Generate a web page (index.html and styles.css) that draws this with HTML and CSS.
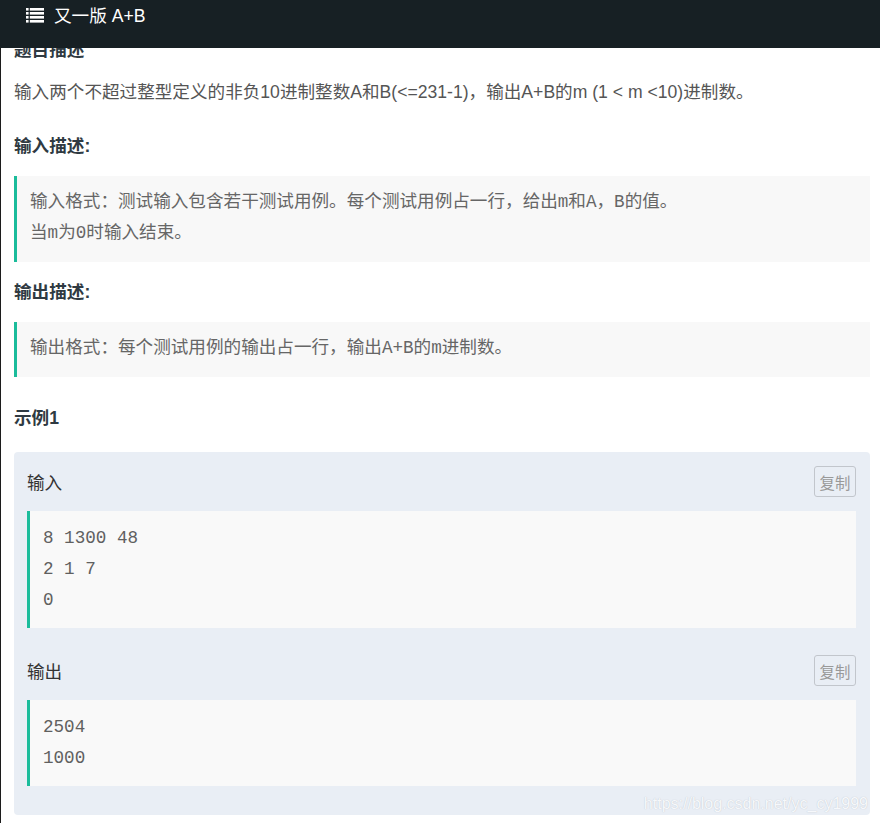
FILE: index.html
```html
<!DOCTYPE html>
<html lang="zh-CN">
<head>
<meta charset="utf-8">
<title>又一版 A+B</title>
<link rel="stylesheet" href="styles.css">
</head>
<body>
<header class="topbar">
  <svg class="list-icon" width="18" height="15" viewBox="0 0 18 15">
    <g fill="#ffffff">
      <rect x="0" y="0" width="2.6" height="2.6"/>
      <rect x="3.8" y="0" width="14.2" height="2.6"/>
      <rect x="0" y="4" width="2.6" height="2.6"/>
      <rect x="3.8" y="4" width="14.2" height="2.6"/>
      <rect x="0" y="8" width="2.6" height="2.6"/>
      <rect x="3.8" y="8" width="14.2" height="2.6"/>
      <rect x="0" y="12" width="2.6" height="2.6"/>
      <rect x="3.8" y="12" width="14.2" height="2.6"/>
    </g>
  </svg>
  <span class="title">又一版 A+B</span>
</header>

<main class="page">
  <h3 class="sec-title first">题目描述</h3>
  <p class="desc">输入两个不超过整型定义的非负10进制整数A和B(&lt;=231-1)，输出A+B的m (1 &lt; m &lt;10)进制数。</p>

  <h3 class="sec-title">输入描述:</h3>
  <blockquote class="quote">输入格式：测试输入包含若干测试用例。每个测试用例占一行，给出m和A，B的值。<br>当m为0时输入结束。</blockquote>

  <h3 class="sec-title">输出描述:</h3>
  <blockquote class="quote">输出格式：每个测试用例的输出占一行，输出A+B的m进制数。</blockquote>

  <h3 class="sec-title example-title">示例1</h3>

  <section class="example">
    <div class="ex-row">
      <span class="ex-label">输入</span>
      <button class="copy-btn">复制</button>
    </div>
    <pre class="code">8 1300 48
2 1 7
0</pre>
    <div class="ex-row second">
      <span class="ex-label">输出</span>
      <button class="copy-btn">复制</button>
    </div>
    <pre class="code">2504
1000</pre>
    <span class="watermark">https://blog.csdn.net/yc_cy1999</span>
  </section>
</main>
</body>
</html>
```

FILE: styles.css
```css
html, body {
  margin: 0;
  padding: 0;
  background: #ffffff;
}

body {
  font-family: "Liberation Sans", "Noto Sans CJK SC", sans-serif;
  font-size: 17.6px;
  color: #333;
  height: 823px;
  overflow: hidden;
}

.topbar {
  position: fixed;
  top: 0;
  left: 0;
  right: 0;
  height: 48px;
  background: #172024;
  display: flex;
  align-items: flex-start;
  padding-left: 26px;
  z-index: 10;
}

.list-icon {
  margin-top: 8px;
  flex: none;
}

.title {
  color: #ffffff;
  font-size: 17.6px;
  line-height: 30px;
  margin-left: 10px;
  margin-top: 1px;
}

.page {
  border-left: 1px solid #1c1c1c;
  padding: 37px 10px 0 13px;
  min-height: 800px;
}

.sec-title {
  margin: 28px 0 17px;
  font-size: 17.6px;
  line-height: 26px;
  font-weight: bold;
  color: #2f3a42;
}

.sec-title.first {
  margin-top: 0;
  margin-bottom: 16px;
}

.desc {
  margin: 0;
  line-height: 26px;
  color: #555;
}

.quote {
  margin: 0;
  background: #f8f8f8;
  border-left: 3px solid #1bbc9b;
  padding: 11px 16px 13px 13px;
  font-family: "Liberation Mono", "Noto Sans CJK SC", monospace;
  font-size: 17.6px;
  line-height: 31px;
  color: #666;
}

.quote + .sec-title {
  margin-top: 17px;
}

.sec-title.example-title {
  margin-top: 28px;
  margin-bottom: 21px;
}

.example {
  position: relative;
  background: #e9eef5;
  border-radius: 4px;
  padding: 14px 14px 29px 13px;
}

.ex-row {
  display: flex;
  justify-content: space-between;
  align-items: center;
  height: 31px;
  margin-bottom: 14px;
}

.ex-row.second {
  margin-top: 27px;
}

.ex-label {
  font-size: 17.6px;
  color: #333;
}

.copy-btn {
  width: 42px;
  height: 31px;
  padding: 0;
  border: 1px solid #c2c6cc;
  border-radius: 3px;
  background: transparent;
  color: #999;
  font-family: "Liberation Sans", "Noto Sans CJK SC", sans-serif;
  font-size: 15.4px;
}

.code {
  margin: 0;
  background: #f9f9f9;
  border-left: 3px solid #1bbc9b;
  padding: 12px 13px 12px 13px;
  font-family: "Liberation Mono", monospace;
  font-size: 17.6px;
  line-height: 31px;
  color: #606060;
}

.watermark {
  position: absolute;
  right: 2px;
  bottom: 2px;
  font-family: "Liberation Sans", sans-serif;
  font-size: 16px;
  color: #f6f8fb;
  text-shadow: 0 0 1px #b9bec6;
}
```
